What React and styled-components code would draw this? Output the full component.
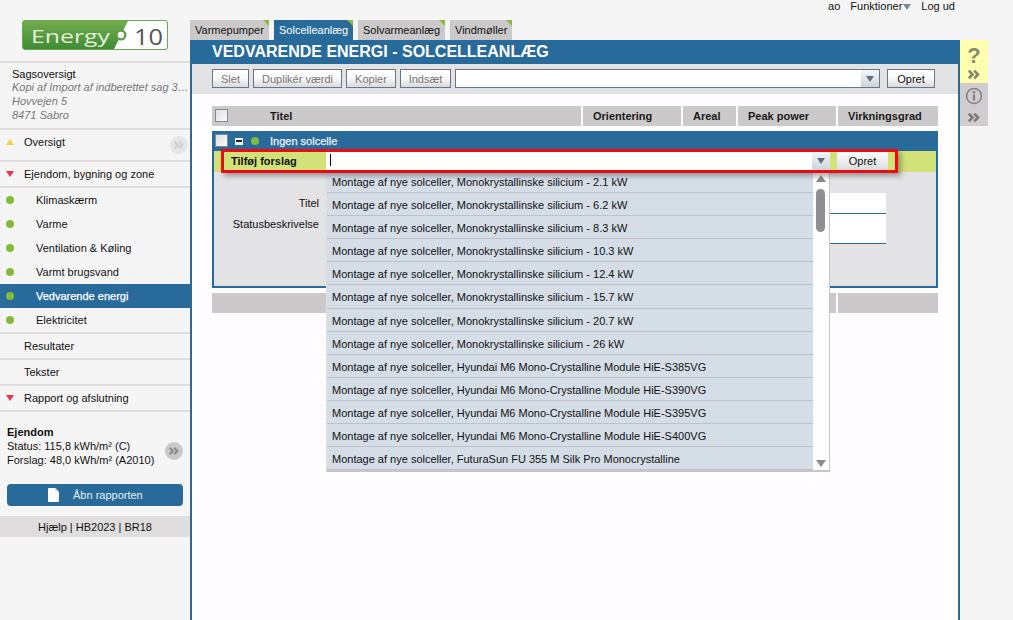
import React from "react";
import styled, { createGlobalStyle } from "styled-components";

const Global = createGlobalStyle`
  html, body { margin: 0; padding: 0; height: 620px; overflow: hidden; background: #f6f5f5; }
  body { font-family: "Liberation Sans", Arial, sans-serif; font-size: 11px; color: #111; }
  * { box-sizing: border-box; }
`;

const BLUE = "#286b9b";
const GREEN = "#84bb3c";

const Page = styled.div`display: flex; width: 1013px; height: 620px; overflow: hidden;`;
const Sidebar = styled.aside`width: 190px; flex: none; display: flex; flex-direction: column;`;
const LogoWrap = styled.div`height: 61px; padding: 20px 0 0 22px;`;
const Summary = styled.section`
  height: 67px; border-top: 2px solid #dedcdc; padding: 4px 0 0 12px; line-height: 14px;
`;
const SummaryTitle = styled.div`color: #111; height: 13px;`;
const SummaryLine = styled.div`
  color: #777; font-style: italic; width: 178px; white-space: nowrap; overflow: hidden; text-overflow: ellipsis;
`;
const NavHead = styled.div`
  position: relative; display: flex; align-items: center; height: ${p => p.$h || 26}px;
  border-top: 2px solid #dedcdc; padding: 0 0 ${p => p.$pb || 0}px 6px; color: #111;
`;
const NavItem = styled.div`
  display: flex; align-items: center; height: 24px; padding-left: 6px;
  background: ${p => p.$active ? BLUE : "transparent"}; color: ${p => p.$active ? "#fff" : "#111"};
  -webkit-text-stroke: ${p => p.$active ? "0.25px #fff" : "0"};
`;
const NavLabel = styled.span`margin-left: ${p => p.$indent}px;`;
const Dot = styled.span`
  display: inline-block; flex: none; width: 8px; height: 8px; border-radius: 50%; background: ${GREEN};
`;
const Tri = styled.span`
  flex: none; width: 0; height: 0; border-left: 4px solid transparent; border-right: 4px solid transparent;
  ${p => p.$up ? "border-bottom: 6px solid #f4cf4a;" : "border-top: 6px solid #ee2f4f;"}
`;
const Round = styled.span`
  position: absolute; right: ${p => p.$r}px; top: ${p => p.$t}px; width: 18px; height: 18px; border-radius: 50%;
  background: ${p => p.$dark ? "#c9c8c8" : "#e6e5e5"}; display: flex; align-items: center; justify-content: center;
`;
const Property = styled.section`
  position: relative; height: 74px; border-top: 2px solid #dedcdc; padding: 13px 0 0 7px; line-height: 14px;
`;
const PropertyTitle = styled.div`font-weight: 700;`;
const ReportBtn = styled.button`
  display: flex; align-items: center; flex: none; width: 176px; height: 22px; margin: 0 0 10px 7px; border: 0; border-radius: 4px;
  background: ${BLUE}; color: #e8eef3; font: 11px "Liberation Sans", Arial, sans-serif; padding: 0 0 0 41px; gap: 14px;
`;
const HelpBar = styled.div`
  height: 21px; flex: none; background: #dfdddd; display: flex; align-items: center; justify-content: center; color: #111; font-size: 11px;
`;

const Right = styled.div`flex: 1; display: flex; flex-direction: column; min-width: 0;`;
const TopLinks = styled.nav`
  height: 20px; display: flex; justify-content: flex-end; align-items: flex-start; gap: 10px;
  padding: 0 58px 0 0; line-height: 13px; color: #111;
`;
const TopItem = styled.span`display: inline-flex; align-items: center; gap: 1px;`;
const MenuTri = styled.span`
  width: 0; height: 0; border-left: 4px solid transparent; border-right: 4px solid transparent; border-top: 6px solid #7b8a9b;
`;
const Tabs = styled.div`height: 20px; display: flex; gap: 5px;`;
const Tab = styled.div`
  position: relative; width: ${p => p.$w}px; height: 20px; padding: 3px 0 0 5px;
  background: ${p => p.$active ? BLUE : "#cbc9ca"}; color: ${p => p.$active ? "#fff" : "#111"}; line-height: 14px;
  &::after {
    content: ""; position: absolute; top: 0; right: 0; border-top: 6px solid ${GREEN}; border-left: 6px solid transparent;
  }
`;
const Work = styled.div`flex: 1; display: flex; min-height: 0;`;
const Main = styled.main`
  width: 770px; flex: none; display: flex; flex-direction: column; background: #fffdff;
  border-left: 2px solid ${BLUE}; border-right: 2px solid ${BLUE};
`;
const Title = styled.h1`
  margin: 0; height: 24px; background: ${BLUE}; color: #fff; font-size: 16px; line-height: 23px;
  font-weight: 700; padding-left: 20px;
`;
const Toolbar = styled.div`
  height: 30px; background: #e3e2e4; display: flex; align-items: flex-start; padding: 5px 0 0 20px;
`;
const Btn = styled.button`
  height: 19px; width: ${p => p.$w}px; margin-right: 4px; flex: none; padding: 0;
  border: 1px solid #65768a; background: linear-gradient(#fff 0%, #fbfbfb 45%, #d9d9dc 100%);
  color: ${p => p.$off ? "#777" : "#111"}; font: 11px "Liberation Sans", Arial, sans-serif;
`;
const SelectBox = styled.div`
  width: 425px; height: 19px; margin-right: 7px; flex: none; display: flex; justify-content: flex-end;
  border: 1px solid #65768a; background: #fff;
`;
const ArrowCell = styled.span`
  width: 18px; background: linear-gradient(#f6f7f9, #cdd4db); display: flex; align-items: center; justify-content: center;
`;
const DownTri = styled.span`
  width: 0; height: 0; border-left: 4px solid transparent; border-right: 4px solid transparent; border-top: 6px solid #5d6f85;
`;
const Content = styled.div`padding: 12px 0 0 20px;`;
const GridRow = styled.div`
  display: grid; grid-template-columns: 369px 98px 53px 98px 100px; column-gap: 2px; width: 726px; height: 20px; margin: ${p => p.$m || 0};
`;
const HeadCell = styled.div`
  position: relative; background: #cbc9ca; font-weight: 700; color: #1a1a1a; line-height: 20px;
  padding-left: ${p => p.$left ? 58 : 10}px;
`;
const Check = styled.span`
  position: absolute; left: ${p => p.$l}px; top: ${p => p.$t}px; width: 13px; height: 13px; border: 1px solid #7f8a96;
  background: linear-gradient(135deg, #dddee0, #fbfbfb);
`;
const Panel = styled.section`
  position: relative; z-index: 1; margin-top: 5px; width: 726px; height: 157px; border: 2px solid ${BLUE}; background: #e3e2e4;
`;
const PanelHead = styled.div`
  height: 18px; background: ${BLUE}; color: #eef3f7; -webkit-text-stroke: 0.25px #eef3f7; display: flex; align-items: center; padding: 0 0 2px 21px;
`;
const Minus = styled.span`
  width: 8px; height: 7px; background: #eee; display: flex; align-items: center; justify-content: center;
  margin-right: 8px; &::after { content: ""; width: 6px; height: 2px; background: #222; }
`;
const AddRow = styled.div`height: 21px; background: #d2e279; display: flex; align-items: flex-start;`;
const AddLabel = styled.div`width: 112px; padding: 3px 0 0 17px; line-height: 14px; font-weight: 700; color: #111;`;
const AddInput = styled.div`
  width: 504px; height: 19px; background: #fff; display: flex; justify-content: space-between;
`;
const Caret = styled.span`width: 1px; height: 12px; background: #000; margin: 3px 0 0 4px;`;
const AddBtn = styled.button`
  width: 51px; height: 19px; margin: 0 0 0 7px; border: 0; padding: 0; background: linear-gradient(#fff, #dcdde0);
  color: #111; font: 11px "Liberation Sans", Arial, sans-serif;
`;
const Form = styled.div`
  display: grid; grid-template-columns: 105px 559px; column-gap: 8px; padding-top: 21px; line-height: 21px;
`;
const FieldLabel = styled.div`text-align: right; color: #111; height: ${p => p.$h}px;`;
const Field = styled.div`height: ${p => p.$h}px; background: #fff; border-bottom: 1px solid ${BLUE};`;
const Highlight = styled.div`
  position: absolute; z-index: 2; left: 7px; top: 16px; width: 677px; height: 24px; border: 3px solid #ed0b12;
  box-shadow: 3px 3px 5px rgba(60,60,60,.45); pointer-events: none;
`;
const Dropdown = styled.div`
  position: absolute; z-index: 1; left: 112px; top: 39px; width: 504px; height: 300px; display: flex; background: #fff;
  border-right: 1px solid #c6c5c7; border-bottom: 2px solid #c6c5c7; overflow: hidden; border-left: 1px solid #e0e0e0;
`;
const Options = styled.div`flex: 1; background: #d5dde7; min-width: 0;`;
const Option = styled.div`
  height: 23px; padding-left: 5px; line-height: 24px; white-space: nowrap; color: #111;
  border-bottom: 1px solid #bfc0c9;
  &:first-child { height: 21px; line-height: 21px; }
  &:nth-child(6) { height: 24px; line-height: 24px; }
`;
const Scroll = styled.div`width: 16px; flex: none; position: relative; background: #fdfdfd;`;
const ScrollUp = styled.span`
  position: absolute; left: 3px; top: 3px; width: 0; height: 0; border-left: 5px solid transparent; border-right: 5px solid transparent; border-bottom: 7px solid #8a898b;
`;
const ScrollDown = styled.span`
  position: absolute; left: 3px; bottom: 3px; width: 0; height: 0; border-left: 5px solid transparent; border-right: 5px solid transparent; border-top: 7px solid #8a898b;
`;
const Thumb = styled.span`
  position: absolute; left: 3px; top: 17px; width: 9px; height: 43px; border-radius: 5px; background: #8f8e90;
`;
const Rail = styled.aside`width: 28px; flex: none; display: flex; flex-direction: column;`;
const RailBox = styled.div`
  height: 43px; background: ${p => p.$yellow ? "#ffffb0" : "#cfcdcf"}; display: flex; flex-direction: column; align-items: center;
`;
const QMark = styled.span`font-size: 22px; font-weight: 700; line-height: 26px; margin-top: 3px; height: 27px; color: #8b8a72;`;

const Chev = ({ c = "#77786e", w = 12, h = 9 }) => (
  <svg width={w} height={h} viewBox="0 0 12 9" style={{ display: "block" }}>
    <path d="M0.8 0.6 L4.6 4.5 L0.8 8.4 M6.2 0.6 L10 4.5 L6.2 8.4" fill="none" stroke={c} strokeWidth="2.6" />
  </svg>
);

const Logo = () => (
  <svg width="146" height="30" viewBox="0 0 146 30" style={{ display: "block" }}>
    <defs>
      <linearGradient id="g" x1="0" y1="0" x2="0" y2="1">
        <stop offset="0" stopColor="#74ad4e" /><stop offset="1" stopColor="#3f8a35" />
      </linearGradient>
    </defs>
    <rect x="0.5" y="0.5" width="145" height="29" rx="2.5" fill="url(#g)" stroke="#6aa650" />
    <path d="M106 1 H143 a2 2 0 0 1 2 2 V27 a2 2 0 0 1 -2 2 H92 Z" fill="#fff" />
    <circle cx="99" cy="15" r="5.5" fill="#5f9d47" />
    <circle cx="99" cy="15" r="3.2" fill="#fff" />
    <text x="9" y="23" fontFamily="'Open Sans', sans-serif" fontWeight="400" fontSize="19" fill="#e4eedc" textLength="79" lengthAdjust="spacingAndGlyphs">Energy</text>
    <text x="112" y="24.5" fontFamily="'Open Sans', sans-serif" fontWeight="400" fontSize="22" fill="#555" textLength="29" lengthAdjust="spacingAndGlyphs">10</text>
  </svg>
);

const DocIcon = () => (
  <svg width="11" height="14" viewBox="0 0 11 14" style={{ display: "block" }}>
    <path d="M1 0 H7 L11 4 V13 a1 1 0 0 1 -1 1 H1 a1 1 0 0 1 -1 -1 V1 a1 1 0 0 1 1 -1 Z" fill="#fff" />
    <path d="M7.4 0 L11 3.6 H7.4 Z" fill="#cfdbe5" />
  </svg>
);

const InfoIcon = () => (
  <svg width="18" height="18" viewBox="0 0 18 18" style={{ display: "block", marginTop: 4, marginBottom: 8 }}>
    <circle cx="9" cy="9" r="7.5" fill="none" stroke="#84837f" strokeWidth="1.6" />
    <circle cx="9" cy="5.2" r="1.3" fill="#84837f" />
    <rect x="7.9" y="7.6" width="2.2" height="6" fill="#84837f" />
  </svg>
);

const options = [
  "Monokrystallinske silicium - 2.1 kW", "Monokrystallinske silicium - 6.2 kW", "Monokrystallinske silicium - 8.3 kW",
  "Monokrystallinske silicium - 10.3 kW", "Monokrystallinske silicium - 12.4 kW", "Monokrystallinske silicium - 15.7 kW",
  "Monokrystallinske silicium - 20.7 kW", "Monokrystallinske silicium - 26 kW",
  "Hyundai M6 Mono-Crystalline Module HiE-S385VG", "Hyundai M6 Mono-Crystalline Module HiE-S390VG",
  "Hyundai M6 Mono-Crystalline Module HiE-S395VG", "Hyundai M6 Mono-Crystalline Module HiE-S400VG",
  "FuturaSun FU 355 M Silk Pro Monocrystalline",
];
const subs = ["Klimaskærm", "Varme", "Ventilation & Køling", "Varmt brugsvand", "Vedvarende energi", "Elektricitet"];

export default function App() {
  return (
    <Page>
      <Global />
      <Sidebar>
        <LogoWrap><Logo /></LogoWrap>
        <Summary>
          <SummaryTitle>Sagsoversigt</SummaryTitle>
          <SummaryLine>Kopi af Import af indberettet sag 3171</SummaryLine>
          <SummaryLine>Hovvejen 5</SummaryLine>
          <SummaryLine>8471 Sabro</SummaryLine>
        </Summary>
        <NavHead $h={32} $pb={6}>
          <Tri $up /><NavLabel $indent={10}>Oversigt</NavLabel>
          <Round $r={2} $t={6}><Chev c="#cfcecd" w={10} h={8} /></Round>
        </NavHead>
        <NavHead><Tri /><NavLabel $indent={10}>Ejendom, bygning og zone</NavLabel></NavHead>
        <NavHead $h={2} />
        {subs.map((s, i) => (
          <NavItem key={s} $active={i === 4}><Dot /><NavLabel $indent={22}>{s}</NavLabel></NavItem>
        ))}
        <NavHead><NavLabel $indent={18}>Resultater</NavLabel></NavHead>
        <NavHead><NavLabel $indent={18}>Tekster</NavLabel></NavHead>
        <NavHead><Tri /><NavLabel $indent={10}>Rapport og afslutning</NavLabel></NavHead>
        <Property>
          <PropertyTitle>Ejendom</PropertyTitle>
          <div>Status: 115,8 kWh/m² (C)</div>
          <div>Forslag: 48,0 kWh/m² (A2010)</div>
          <Round $r={7} $t={30} $dark><Chev c="#8d8c8c" w={10} h={8} /></Round>
        </Property>
        <ReportBtn><DocIcon />Åbn rapporten</ReportBtn>
        <HelpBar>Hjælp | HB2023 | BR18</HelpBar>
      </Sidebar>
      <Right>
        <TopLinks>
          <span>ao</span>
          <TopItem>Funktioner<MenuTri /></TopItem>
          <span>Log ud</span>
        </TopLinks>
        <Tabs>
          <Tab $w={79}>Varmepumper</Tab>
          <Tab $w={79} $active>Solcelleanlæg</Tab>
          <Tab $w={87}>Solvarmeanlæg</Tab>
          <Tab $w={62}>Vindmøller</Tab>
        </Tabs>
        <Work>
          <Main>
            <Title>VEDVARENDE ENERGI - SOLCELLEANLÆG</Title>
            <Toolbar>
              <Btn $w={37} $off>Slet</Btn>
              <Btn $w={89} $off>Duplikér værdi</Btn>
              <Btn $w={50} $off>Kopier</Btn>
              <Btn $w={51} $off>Indsæt</Btn>
              <SelectBox><ArrowCell><DownTri /></ArrowCell></SelectBox>
              <Btn $w={48}>Opret</Btn>
            </Toolbar>
            <Content>
              <GridRow>
                <HeadCell $left><Check $l={3} $t={3} />Titel</HeadCell>
                <HeadCell>Orientering</HeadCell>
                <HeadCell>Areal</HeadCell>
                <HeadCell>Peak power</HeadCell>
                <HeadCell>Virkningsgrad</HeadCell>
              </GridRow>
              <Panel>
                <PanelHead>
                  <Check $l={1} $t={1} />
                  <Minus /><Dot /><NavLabel $indent={11}>Ingen solcelle</NavLabel>
                </PanelHead>
                <AddRow>
                  <AddLabel>Tilføj forslag</AddLabel>
                  <AddInput><Caret /><ArrowCell><DownTri /></ArrowCell></AddInput>
                  <AddBtn>Opret</AddBtn>
                </AddRow>
                <Form>
                  <FieldLabel $h={21}>Titel</FieldLabel>
                  <Field $h={21} />
                  <FieldLabel $h={30}>Statusbeskrivelse</FieldLabel>
                  <Field $h={30} />
                </Form>
                <Dropdown>
                  <Options>
                    {options.map(o => <Option key={o}>Montage af nye solceller, {o}</Option>)}
                  </Options>
                  <Scroll><ScrollUp /><Thumb /><ScrollDown /></Scroll>
                </Dropdown>
                <Highlight />
              </Panel>
              <GridRow $m="5px 0 0">
                <HeadCell /><HeadCell /><HeadCell /><HeadCell /><HeadCell />
              </GridRow>
            </Content>
          </Main>
          <Rail>
            <RailBox $yellow><QMark>?</QMark><Chev c="#86866f" /></RailBox>
            <RailBox><InfoIcon /><Chev c="#7c7b78" /></RailBox>
          </Rail>
        </Work>
      </Right>
    </Page>
  );
}
